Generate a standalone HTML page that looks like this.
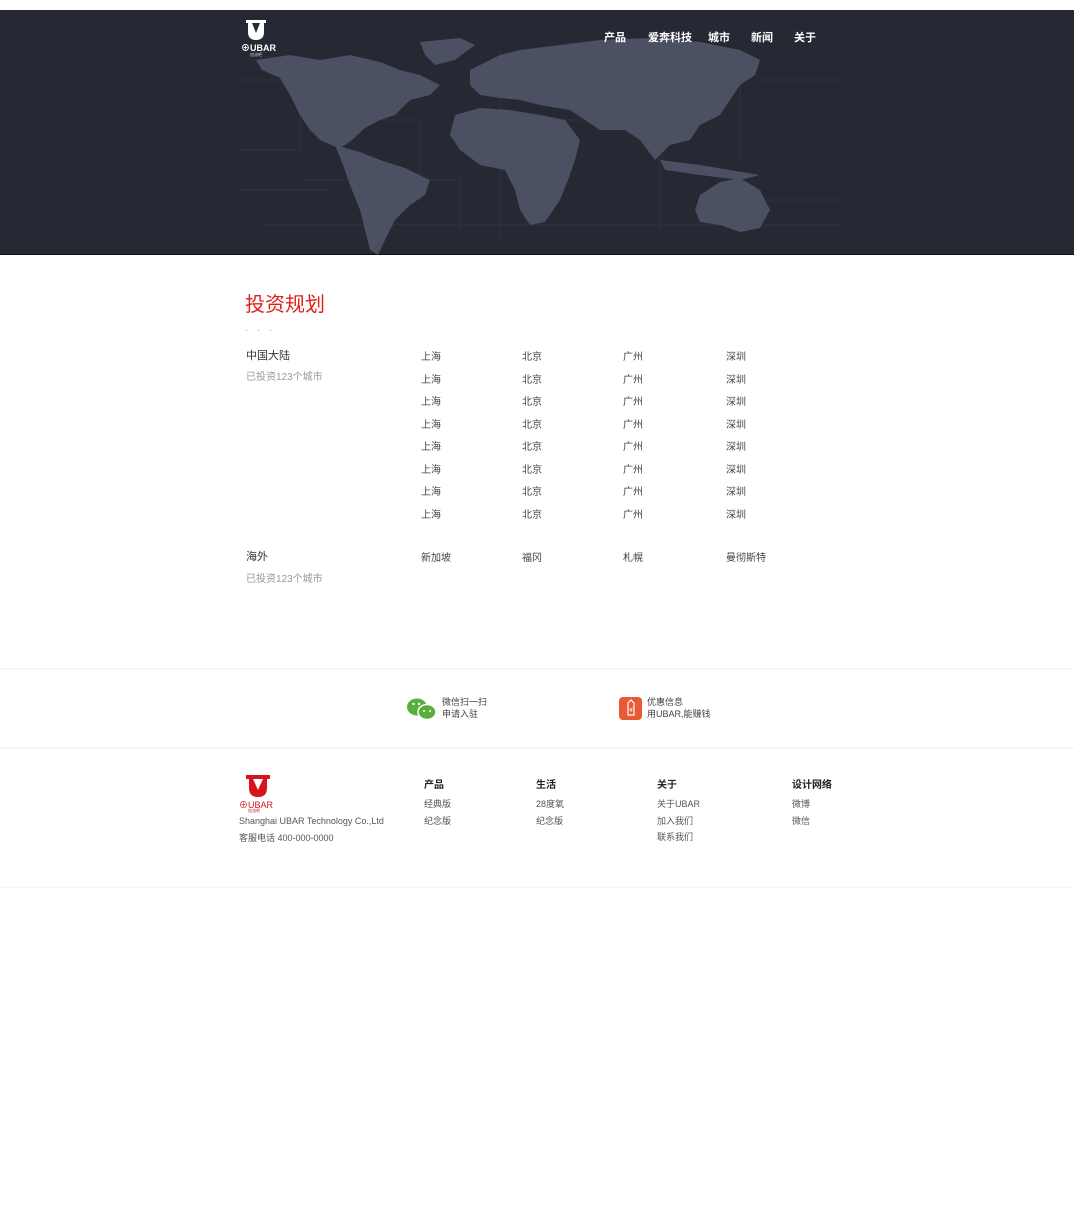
<!DOCTYPE html>
<html><head><meta charset="utf-8"><style>
*{margin:0;padding:0;box-sizing:border-box}
body{width:1078px;height:1220px;background:#fff;font-family:"Liberation Sans","Noto Sans CJK SC",sans-serif;position:relative;overflow:hidden;color:#333}
.a{position:absolute;white-space:nowrap}
.hdr{position:absolute;left:0;top:10px;width:1074px;height:245px;background:#262833;border-bottom:1px solid #111}
.nav{color:#fff;font-size:11px;font-weight:bold;top:29px}
.c{font-size:10px;color:#444}
.g{font-size:10px;color:#999}
.line{position:absolute;left:0;width:1074px;height:2px;background:#f6f6f6}
.fh{font-size:10px;color:#222;font-weight:bold;top:776px}
.fl{font-size:9px;color:#555}
</style></head><body>
<div class="hdr">
<svg width="1074" height="245" viewBox="0 10 1074 245" style="position:absolute;left:0;top:0">
<g stroke="#30333f" fill="none" stroke-width="1">
<path d="M235 80H300V150H235M300 180H460V230M320 120H420V200M500 50V240M560 120H660V230M640 60H740V160M760 80H840M700 200H840M260 225H840M235 190H330"/>
</g>
<g fill="#4b5062">
<path d="M256 60L290 55L320 60L350 55L380 62L400 70L420 75L440 85L430 95L410 100L395 115L380 120L365 128L352 140L345 145L338 148L320 140L310 130L300 115L290 95L280 78L262 70Z"/>
<path d="M335 145L360 152L380 160L405 168L430 180L425 195L410 205L395 220L385 240L378 255L370 250L365 230L360 210L350 185L343 165Z"/>
<path d="M420 42L460 38L475 45L455 60L435 65L425 55Z"/>
<path d="M470 70L500 55L520 50L560 45L600 40L650 38L700 42L740 50L760 60L755 75L740 85L730 100L720 115L700 125L690 140L670 145L655 160L640 140L625 130L600 130L585 120L570 110L540 105L520 100L500 98L480 95L470 85Z"/>
<path d="M455 115L480 108L510 110L540 115L565 120L580 140L575 160L568 180L560 200L545 222L530 225L520 210L515 190L505 170L480 165L460 150L450 135Z"/>
<path d="M700 195L720 182L740 178L760 190L770 210L760 228L740 232L720 225L700 222L695 210Z"/>
<path d="M660 160L700 165L730 170L760 175L740 180L700 175L665 170Z"/>
</g>
</svg>
<svg class="a" style="left:244px;top:9px" width="24" height="22" viewBox="0 0 24 22"><path d="M2 1H22V4H20V13Q20 21 12 21Q4 21 4 13V4H2Z" fill="#fff"/><path d="M8 4H16L12 14Z" fill="#262833"/></svg>
<div class="a" style="left:241px;top:31px;color:#fff;font-size:9px;font-weight:bold">⊕UBAR</div>
<div class="a" style="left:250px;top:42px;color:#ccc;font-size:4px">加油吧</div>
</div>
<div class="a nav" style="left:604px">产品</div>
<div class="a nav" style="left:648px">爱奔科技</div>
<div class="a nav" style="left:708px">城市</div>
<div class="a nav" style="left:751px">新闻</div>
<div class="a nav" style="left:794px">关于</div>

<div class="a" style="left:245px;top:288px;font-size:20px;color:#e0221b">投资规划</div>
<div class="a" style="left:245px;top:325px;font-size:9px;color:#999;letter-spacing:9px">···</div>
<div class="a" style="left:246px;top:347px;font-size:11px;color:#333">中国大陆</div>
<div class="a g" style="left:246px;top:368px">已投资123个城市</div>
<div class="a c" style="left:421px;top:347px;line-height:22.5px">上海<br>上海<br>上海<br>上海<br>上海<br>上海<br>上海<br>上海</div>
<div class="a c" style="left:522px;top:347px;line-height:22.5px">北京<br>北京<br>北京<br>北京<br>北京<br>北京<br>北京<br>北京</div>
<div class="a c" style="left:623px;top:347px;line-height:22.5px">广州<br>广州<br>广州<br>广州<br>广州<br>广州<br>广州<br>广州</div>
<div class="a c" style="left:726px;top:347px;line-height:22.5px">深圳<br>深圳<br>深圳<br>深圳<br>深圳<br>深圳<br>深圳<br>深圳</div>
<div class="a" style="left:246px;top:548px;font-size:11px;color:#333">海外</div>
<div class="a g" style="left:246px;top:570px">已投资123个城市</div>
<div class="a c" style="left:421px;top:549px">新加坡</div>
<div class="a c" style="left:522px;top:549px">福冈</div>
<div class="a c" style="left:623px;top:549px">札幌</div>
<div class="a c" style="left:726px;top:549px">曼彻斯特</div>

<div class="line" style="top:668px"></div>
<svg class="a" style="left:406px;top:697px" width="32" height="26" viewBox="0 0 32 26"><ellipse cx="11" cy="10" rx="10" ry="8.5" fill="#5aaf3a"/><ellipse cx="21" cy="15" rx="9" ry="7.5" fill="#5aaf3a" stroke="#fff" stroke-width="1.5"/><circle cx="7.5" cy="7" r="1.2" fill="#fff"/><circle cx="13" cy="7" r="1.2" fill="#fff"/><circle cx="18" cy="14" r="1" fill="#fff"/><circle cx="24" cy="14" r="1" fill="#fff"/></svg>
<div class="a fl" style="left:442px;top:696px;line-height:12px;color:#444">微信扫一扫<br>申请入驻</div>
<svg class="a" style="left:619px;top:697px" width="24" height="24" viewBox="0 0 24 24"><rect width="23" height="23" rx="4" fill="#e85a35"/><path d="M9 6L12 3L15 6V18H9Z" fill="none" stroke="#fff" stroke-width="1.2"/><text x="12" y="15" font-size="6" fill="#fff" text-anchor="middle">¥</text></svg>
<div class="a fl" style="left:647px;top:696px;line-height:12px;color:#444">优惠信息<br>用UBAR,能赚钱</div>
<div class="line" style="top:747px"></div>

<svg class="a" style="left:244px;top:774px" width="28" height="24" viewBox="0 0 28 24"><path d="M2 1H26V5H23V14Q23 23 14 23Q5 23 5 14V5H2Z" fill="#d7141d"/><path d="M9 5H19L14 16Z" fill="#fff"/></svg>
<div class="a" style="left:239px;top:798px;font-size:9px;color:#d7141d">⊕UBAR</div>
<div class="a" style="left:248px;top:808px;font-size:4px;color:#d7141d">加油吧</div>
<div class="a fl" style="left:239px;top:816px">Shanghai UBAR Technology Co.,Ltd</div>
<div class="a fl" style="left:239px;top:831px">客服电话 400-000-0000</div>
<div class="a fh" style="left:424px">产品</div>
<div class="a fh" style="left:536px">生活</div>
<div class="a fh" style="left:657px">关于</div>
<div class="a fh" style="left:792px">设计网络</div>
<div class="a fl" style="left:424px;top:796px;line-height:16.5px">经典版<br>纪念版</div>
<div class="a fl" style="left:536px;top:796px;line-height:16.5px">28度氧<br>纪念版</div>
<div class="a fl" style="left:657px;top:796px;line-height:16.5px">关于UBAR<br>加入我们<br>联系我们</div>
<div class="a fl" style="left:792px;top:796px;line-height:16.5px">微博<br>微信</div>
<div class="line" style="top:887px;height:1px"></div>
</body></html>
